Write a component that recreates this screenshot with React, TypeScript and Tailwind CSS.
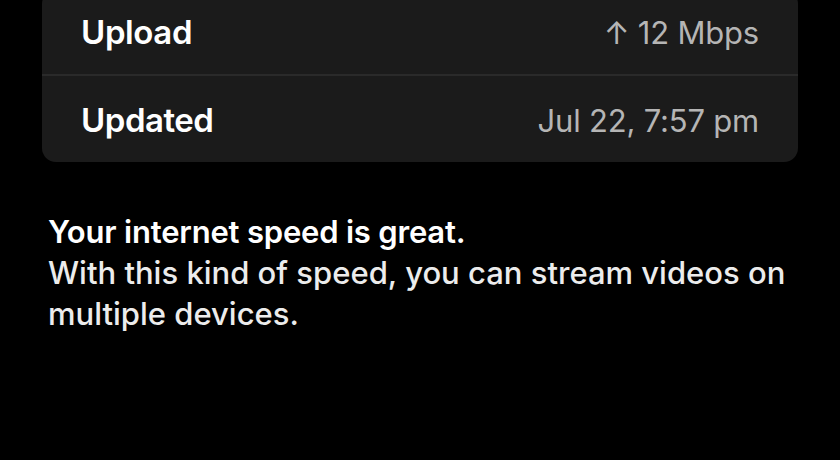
import React from "react";

export default function App() {
  return (
    <div
      className="w-[840px] h-[460px] overflow-hidden bg-black text-white"
      style={{ fontFamily: "Inter, 'Noto Sans', sans-serif" }}
    >
      <div className="px-[42px]">
        <div className="-mt-[10px] bg-[#1b1b1b] rounded-[14px] w-[756px]">
          <div className="h-[84px] pt-[2px] flex items-center justify-between px-[39px]">
            <span className="text-[33px] font-semibold tracking-[-0.4px]">Upload</span>
            <span className="text-[31px] text-[#b5b5b5] tracking-[-0.2px]">↑ 12 Mbps</span>
          </div>
          <div className="h-[2px] bg-[#2a2a2a]" />
          <div className="h-[86px] pt-[4px] flex items-center justify-between px-[39px]">
            <span className="text-[33px] font-semibold tracking-[-0.5px]">Updated</span>
            <span className="text-[31px] text-[#b5b5b5] tracking-[-0.2px]">Jul 22, 7:57 pm</span>
          </div>
        </div>
        <div className="mt-[49px] pl-[6px] text-[31px] leading-[41px]">
          <p className="font-semibold tracking-[-0.2px]">Your internet speed is great.</p>
          <p className="font-medium text-[#ececec]">
            With this kind of speed, you can stream videos on multiple devices.
          </p>
        </div>
      </div>
    </div>
  );
}
